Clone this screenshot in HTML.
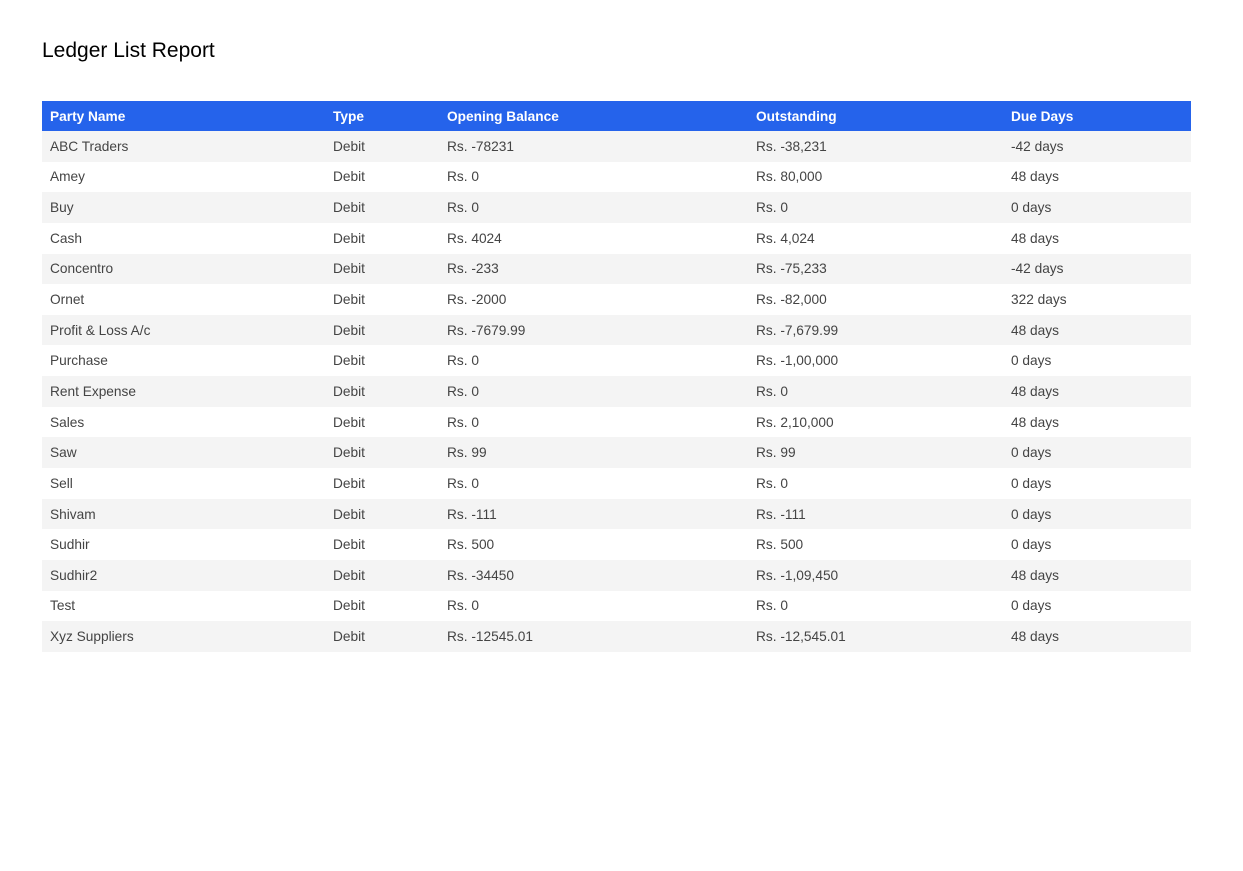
<!DOCTYPE html>
<html><head><meta charset="utf-8"><style>
html,body{margin:0;padding:0;background:#fff;width:1243px;height:871px;overflow:hidden}
body{font-family:"Liberation Sans",Arial,sans-serif}
h1{position:absolute;left:42px;top:37px;margin:0;font-size:21px;font-weight:normal;color:#000;line-height:28px}
table{position:absolute;left:42px;top:101px;width:1149px;border-collapse:collapse;table-layout:fixed}
th,td{padding:0 8px;text-align:left;font-size:13.7px;white-space:nowrap}
th{background:#2563eb;color:#fff;font-weight:bold;height:30px}
td{color:#444;height:30.65px}
tr:nth-child(odd) td{background:#f4f4f4}
</style></head><body>
<h1>Ledger List Report</h1>
<table>
<colgroup><col style="width:283px"><col style="width:114px"><col style="width:309px"><col style="width:255px"><col style="width:188px"></colgroup>
<thead><tr><th>Party Name</th><th>Type</th><th>Opening Balance</th><th>Outstanding</th><th>Due Days</th></tr></thead>
<tbody>
<tr><td>ABC Traders</td><td>Debit</td><td>Rs. -78231</td><td>Rs. -38,231</td><td>-42 days</td></tr>
<tr><td>Amey</td><td>Debit</td><td>Rs. 0</td><td>Rs. 80,000</td><td>48 days</td></tr>
<tr><td>Buy</td><td>Debit</td><td>Rs. 0</td><td>Rs. 0</td><td>0 days</td></tr>
<tr><td>Cash</td><td>Debit</td><td>Rs. 4024</td><td>Rs. 4,024</td><td>48 days</td></tr>
<tr><td>Concentro</td><td>Debit</td><td>Rs. -233</td><td>Rs. -75,233</td><td>-42 days</td></tr>
<tr><td>Ornet</td><td>Debit</td><td>Rs. -2000</td><td>Rs. -82,000</td><td>322 days</td></tr>
<tr><td>Profit &amp; Loss A/c</td><td>Debit</td><td>Rs. -7679.99</td><td>Rs. -7,679.99</td><td>48 days</td></tr>
<tr><td>Purchase</td><td>Debit</td><td>Rs. 0</td><td>Rs. -1,00,000</td><td>0 days</td></tr>
<tr><td>Rent Expense</td><td>Debit</td><td>Rs. 0</td><td>Rs. 0</td><td>48 days</td></tr>
<tr><td>Sales</td><td>Debit</td><td>Rs. 0</td><td>Rs. 2,10,000</td><td>48 days</td></tr>
<tr><td>Saw</td><td>Debit</td><td>Rs. 99</td><td>Rs. 99</td><td>0 days</td></tr>
<tr><td>Sell</td><td>Debit</td><td>Rs. 0</td><td>Rs. 0</td><td>0 days</td></tr>
<tr><td>Shivam</td><td>Debit</td><td>Rs. -111</td><td>Rs. -111</td><td>0 days</td></tr>
<tr><td>Sudhir</td><td>Debit</td><td>Rs. 500</td><td>Rs. 500</td><td>0 days</td></tr>
<tr><td>Sudhir2</td><td>Debit</td><td>Rs. -34450</td><td>Rs. -1,09,450</td><td>48 days</td></tr>
<tr><td>Test</td><td>Debit</td><td>Rs. 0</td><td>Rs. 0</td><td>0 days</td></tr>
<tr><td>Xyz Suppliers</td><td>Debit</td><td>Rs. -12545.01</td><td>Rs. -12,545.01</td><td>48 days</td></tr>
</tbody></table>
</body></html>
